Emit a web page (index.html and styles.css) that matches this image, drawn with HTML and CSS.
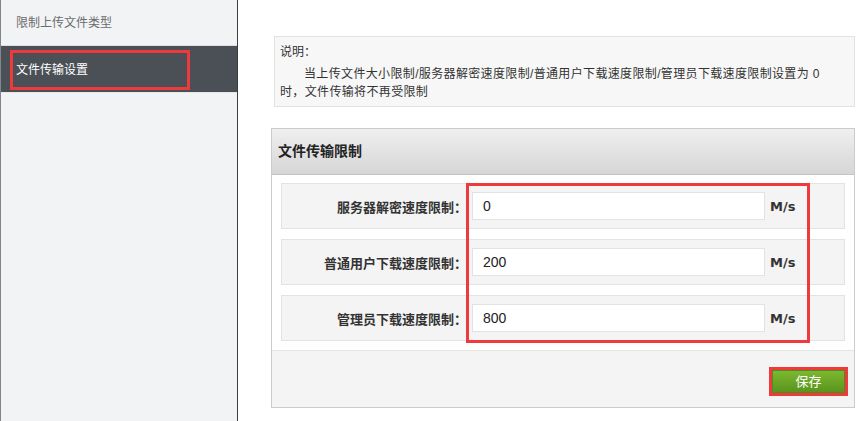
FILE: index.html
```html
<!DOCTYPE html>
<html lang="zh-CN">
<head>
<meta charset="utf-8">
<title>文件传输设置</title>
<link rel="stylesheet" href="styles.css">
</head>
<body>
<div class="page">
  <aside class="sidebar">
    <div class="nav-item">限制上传文件类型</div>
    <div class="nav-item active">文件传输设置<span class="mark mark-nav"></span></div>
  </aside>
  <main class="content">
    <div class="note">
      <div class="note-title">说明<span class="colon">：</span></div>
      <div class="note-text">当上传文件大小限制/服务器解密速度限制/普通用户下载速度限制/管理员下载速度限制设置为 0<br>时，文件传输将不再受限制</div>
    </div>
    <section class="panel">
      <div class="panel-head">文件传输限制</div>
      <div class="panel-body">
        <div class="rows">
          <div class="row">
            <label class="row-label">服务器解密速度限制<span class="colon">：</span></label>
            <input class="row-input" type="text" value="0">
            <span class="row-unit">M/s</span>
          </div>
          <div class="row">
            <label class="row-label">普通用户下载速度限制<span class="colon">：</span></label>
            <input class="row-input" type="text" value="200">
            <span class="row-unit">M/s</span>
          </div>
          <div class="row">
            <label class="row-label">管理员下载速度限制<span class="colon">：</span></label>
            <input class="row-input" type="text" value="800">
            <span class="row-unit">M/s</span>
          </div>
          <span class="mark mark-inputs"></span>
        </div>
      </div>
      <div class="panel-foot">
        <button class="save" type="button">保存</button>
      </div>
    </section>
  </main>
</div>
</body>
</html>
```

FILE: styles.css
```css
* { box-sizing: border-box; }

html, body {
  margin: 0;
  padding: 0;
  background: #ffffff;
  font-family: "Liberation Sans", "Noto Sans CJK SC", sans-serif;
  color: #333333;
}

.page {
  display: flex;
  width: 865px;
  height: 421px;
  overflow: hidden;
}

.colon {
  font-family: "Noto Sans CJK TC", "Noto Sans CJK SC", sans-serif;
}

/* Sidebar */
.sidebar {
  width: 238px;
  flex: none;
  height: 421px;
  background: #f2f3f5;
  border-left: 1px solid #7e868e;
  border-right: 1px solid #3a3d40;
}

.nav-item {
  position: relative;
  height: 46px;
  padding: 2px 0 0 15px;
  font-size: 12px;
  line-height: 43px;
  color: #6b6b6b;
  border-bottom: 1px solid #dcdee1;
}

.nav-item.active {
  height: 47px;
  padding-top: 2px;
  line-height: 44px;
  background: #4a5056;
  color: #ffffff;
  border-bottom: 1px solid #e6e7e9;
}

.mark {
  position: absolute;
  border: 3px solid #ee3a3d;
  pointer-events: none;
}

.mark-nav {
  left: 9px;
  top: 4px;
  width: 180px;
  height: 40px;
}

/* Content */
.content {
  flex: 1;
  padding: 36px 10px 0 33px;
}

.note {
  margin-left: 3px;
  background: #f7f7f7;
  border: 1px solid #e2e2e2;
  padding: 5px 6px 5px 5px;
  font-size: 12px;
  line-height: 18px;
  color: #333333;
}

.note-title {
  margin-bottom: 4px;
}

.note-text {
  text-indent: 24px;
  letter-spacing: 0.35px;
}

.panel {
  margin-top: 21px;
  border: 1px solid #cbcbcb;
  background: #ffffff;
}

.panel-head {
  height: 46px;
  padding-left: 6px;
  font-size: 14px;
  font-weight: bold;
  line-height: 45px;
  color: #222222;
  background: linear-gradient(#efefef, #d6d6d6);
  border-bottom: 1px solid #c4c4c4;
}

.panel-body {
  padding: 8px 9px 9px 9px;
}

.rows {
  position: relative;
  display: flex;
  flex-direction: column;
  gap: 10px;
}

.row {
  display: flex;
  align-items: center;
  height: 46px;
  background: #f4f4f4;
  border: 1px solid #e3e3e3;
}

.row-label {
  width: 185px;
  text-align: right;
  font-size: 13px;
  font-weight: bold;
  color: #333333;
}

.row-input {
  margin-left: 5px;
  width: 293px;
  height: 28px;
  border: 1px solid #e2e2e2;
  background: #ffffff;
  padding: 0 0 0 10px;
  font-family: "Liberation Sans", sans-serif;
  font-size: 14px;
  color: #222222;
  outline: none;
}

.row-unit {
  margin-left: 5px;
  font-family: "DejaVu Sans", sans-serif;
  font-size: 13px;
  font-weight: bold;
  color: #333333;
}

.mark-inputs {
  left: 185px;
  top: 0;
  width: 344px;
  height: 160px;
}

.panel-foot {
  display: flex;
  justify-content: flex-end;
  align-items: flex-start;
  height: 57px;
  padding: 19px 9px 0 0;
  background: #f4f4f4;
  border-top: 1px solid #e4e4e4;
}

.save {
  width: 73px;
  height: 23px;
  padding: 0;
  border: 1px solid #4f8a1c;
  background: linear-gradient(#7cb82f, #5a931f);
  color: #ffffff;
  font-family: "Liberation Sans", "Noto Sans CJK SC", sans-serif;
  font-size: 13px;
  line-height: 21px;
  outline: 3px solid #ee3a3d;
  cursor: pointer;
}
```
